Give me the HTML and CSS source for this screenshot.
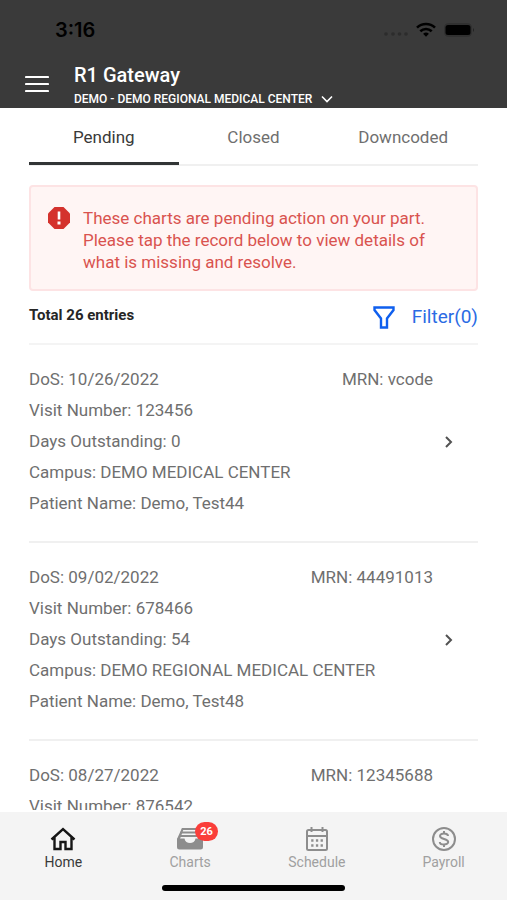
FILE: index.html
```
<!DOCTYPE html>
<html lang="en">

<head>
    <meta charset="UTF-8">
    <meta name="viewport" content="width=device-width, initial-scale=1.0">
    <title>R1 Gateway</title>
    <link rel="stylesheet" href="styles.css">
</head>

<body>
    <header>
        <div class="status-bar">
            <span class="time">3:16</span>
            <div class="status-icons">
                <svg width="24" height="12" viewBox="0 0 24 12" fill="#2c2c2c">
                    <circle cx="2" cy="10" r="1.8"/><circle cx="9" cy="10" r="1.8"/><circle cx="15.5" cy="10" r="1.8"/><circle cx="22" cy="10" r="1.8"/>
                </svg>
                <svg width="20" height="16" viewBox="0 0 20 16" fill="none" stroke="#000" stroke-width="2.6">
                    <path d="M1 5.600a13 13 0 0 1 18 0M4.300 9.200a8.400 8.400 0 0 1 11.400 0"/>
                    <path d="M10 14.800l-2.900-3a4.200 4.200 0 0 1 5.800 0z" fill="#000" stroke="none"/>
                </svg>
                <svg width="31" height="14" viewBox="0 0 31 14">
                    <rect x=".5" y=".5" width="27" height="13" rx="4" fill="#303030" stroke="#303030"/>
                    <rect x="1.5" y="2" width="25" height="10" rx="2.5" fill="#000"/>
                    <path d="M29 5v4q2-2 0-4z" fill="#222"/>
                </svg>
            </div>
        </div>
        <div class="app-bar">
            <button type="button" class="menu-btn" aria-label="Menu">
                <svg width="24" height="18" viewBox="0 0 24 18" stroke="#fff" stroke-width="2.2" stroke-linecap="round">
                    <path d="M1 2h22M1 9h22M1 16h22"/>
                </svg>
            </button>
            <div>
                <h1>R1 Gateway</h1>
                <button type="button" class="facility-btn">DEMO - DEMO REGIONAL MEDICAL CENTER
                    <svg width="12" height="8" viewBox="0 0 12 8" fill="none" stroke="#fff" stroke-width="1.6">
                        <path d="M1 1.500l5 5 5-5"/>
                    </svg>
                </button>
            </div>
        </div>
    </header>

    <main>
        <div class="tabs">
            <button type="button" class="tab active">Pending</button>
            <button type="button" class="tab">Closed</button>
            <button type="button" class="tab">Downcoded</button>
        </div>

        <div class="alert">
            <svg width="24" height="24" viewBox="0 0 24 24">
                <path d="M7.500 1h9L23 7.500v9L16.500 23h-9L1 16.500v-9z" fill="#d4322d"/>
                <path d="M10.700 5.500h2.600v8h-2.600zM10.500 15.500h3v3h-3z" fill="#fff"/>
            </svg>
            <p>These charts are pending action on your part. Please tap the record below to view details of what is missing and resolve.</p>
        </div>

        <div class="list-header">
            <strong>Total 26 entries</strong>
            <button type="button" class="filter-btn">
                <svg width="22" height="23" viewBox="0 0 22 23" fill="none" stroke="#0f5fee" stroke-width="2.4">
                    <path d="M1.500 1.500h19v2.600L14 12.500v9H8v-9L1.500 4.100z"/>
                </svg>
                Filter(0)
            </button>
        </div>

        <ul class="records">
            <li>
                <a href="#" class="record">
                    <div class="details">
                        <div class="row"><span>DoS: 10/26/2022</span><span>MRN: vcode</span></div>
                        <div>Visit Number: 123456</div>
                        <div>Days Outstanding: 0</div>
                        <div>Campus: DEMO MEDICAL CENTER</div>
                        <div>Patient Name: Demo, Test44</div>
                    </div>
                    <svg class="chevron" width="8" height="12" viewBox="0 0 8 12"><path d="M1 1l5 5-5 5"/></svg>
                </a>
            </li>
            <li>
                <a href="#" class="record">
                    <div class="details">
                        <div class="row"><span>DoS: 09/02/2022</span><span>MRN: 44491013</span></div>
                        <div>Visit Number: 678466</div>
                        <div>Days Outstanding: 54</div>
                        <div>Campus: DEMO REGIONAL MEDICAL CENTER</div>
                        <div>Patient Name: Demo, Test48</div>
                    </div>
                    <svg class="chevron" width="8" height="12" viewBox="0 0 8 12"><path d="M1 1l5 5-5 5"/></svg>
                </a>
            </li>
            <li>
                <a href="#" class="record">
                    <div class="details">
                        <div class="row"><span>DoS: 08/27/2022</span><span>MRN: 12345688</span></div>
                        <div>Visit Number: 876542</div>
                    </div>
                    <svg class="chevron" width="8" height="12"></svg>
                </a>
            </li>
        </ul>
    </main>

    <footer>
        <nav>
            <a href="#" class="active">
                <svg width="26" height="24" viewBox="0 0 26 24" fill="none" stroke="#161616" stroke-width="2.4">
                    <path d="M1.500 12.500L13 2l11.500 10.500M4.500 10v12h6v-7h5v7h6V10"/>
                </svg>
                Home
            </a>
            <a href="#">
                <span class="icon-wrap">
                    <svg width="26" height="24" viewBox="0 0 26 24" fill="#8d8d8d">
                        <path d="M5 1h16l1 2H4.500zM3.800 4.500h18.400l.8 2H3zM2.500 8h21l.5 2H2z"/>
                        <path d="M5 1h2L3 12H0zM21 1h-2l4 11h3z"/>
                        <path d="M0 11.500h7.500c.6 6 10.400 6 11 0H26V20q0 2.500-2.500 2.500h-21Q0 22.500 0 20z"/>
                    </svg>
                    <span class="badge">26</span>
                </span>
                Charts
            </a>
            <a href="#">
                <svg width="24" height="24" viewBox="0 0 24 24" fill="none" stroke="#8d8d8d" stroke-width="2">
                    <rect x="2" y="3" width="20" height="20" rx="1.5"/>
                    <path d="M2 9h20M6.500 0v5M17.500 0v5"/>
                    <path d="M6.200 13.500h2.300M10.900 13.500h2.300M15.600 13.500h2.300M6.200 18.500h2.300M10.900 18.500h2.300M15.600 18.500h2.300" stroke-width="2.3"/>
                </svg>
                Schedule
            </a>
            <a href="#">
                <svg width="24" height="24" viewBox="0 0 24 24" fill="none" stroke="#8d8d8d" stroke-width="2">
                    <circle cx="12" cy="12" r="11"/>
                    <path d="M16 9c0-3.200-8-3.400-8 0 0 3.600 8.200 2.300 8.200 6 0 3.500-8.400 3.300-8.400 0M12 4v3M12 17v3"/>
                </svg>
                Payroll
            </a>
        </nav>
        <div class="home-indicator"></div>
    </footer>
</body>

</html>
```
FILE: styles.css
```
* {
    box-sizing: border-box;
}

body {
    font-family: Roboto, "Liberation Sans", sans-serif;
    font-size: 17px;
    color: #6f6f6f;
    background-color: #fff;
    margin: 0;
    height: 100vh;
    display: flex;
    flex-direction: column;
}

button {
    font: inherit;
    color: inherit;
    background: none;
    border: none;
    padding: 0;
    cursor: pointer;
}

svg {
    display: block;
    flex-shrink: 0;
}

/* Header */
header {
    background-color: #3a3a3a;
    color: #fff;
    flex-shrink: 0;
}

.status-bar {
    display: flex;
    justify-content: space-between;
    align-items: center;
    height: 60px;
    padding: 0 32px 0 55px;
}

.time {
    font-family: Inter, sans-serif;
    font-size: 20px;
    font-weight: 600;
    color: #000;
}

.status-icons {
    display: flex;
    align-items: center;
    gap: 8px;
}

.app-bar {
    display: flex;
    align-items: center;
    gap: 25px;
    height: 48px;
    padding: 0 25px;
}

h1 {
    font-size: 20px;
    font-weight: 500;
    line-height: 24px;
    margin: 4px 0 2px;
}

.facility-btn {
    display: flex;
    align-items: center;
    gap: 9px;
    font-size: 12px;
    font-weight: 500;
    line-height: 20px;
}

/* Content */
main {
    flex: 1;
    min-height: 0;
    overflow: auto;
    scrollbar-width: none;
    margin-bottom: 2px;
    padding: 0 29px;
}

.tabs {
    display: flex;
    border-bottom: 2px solid #f0f0f0;
}

.tab {
    flex: 1;
    height: 57px;
    margin-bottom: -1px;
    padding-top: 4px;
    border-bottom: 3px solid transparent;
}

.tab.active {
    color: #393939;
    border-bottom-color: #323536;
}

.alert {
    display: flex;
    gap: 12px;
    margin-top: 19px;
    padding: 20px 40px 16px 16px;
    color: #d9534f;
    background-color: #fff5f4;
    border: 2px solid #fde3e4;
    border-radius: 4px;
}

.alert svg {
    margin-top: -1px;
}

.alert p {
    margin: 0;
    line-height: 22px;
}

.list-header {
    display: flex;
    justify-content: space-between;
    height: 54px;
    line-height: 48px;
    border-bottom: 2px solid #f4f4f4;
}

.list-header strong {
    font-size: 15px;
    color: #262626;
}

.filter-btn {
    display: flex;
    align-items: center;
    gap: 17px;
    font-size: 19px;
    color: #2b6be4;
}

.records {
    list-style: none;
    margin: 0;
    padding: 0;
}

.record {
    display: flex;
    align-items: center;
    gap: 12px;
    padding: 19px 25px 22px 0;
    line-height: 31px;
    color: inherit;
    text-decoration: none;
    border-bottom: 2px solid #f0f0f0;
}

.details {
    flex: 1;
}

.row {
    display: flex;
    justify-content: space-between;
}

.chevron {
    fill: none;
    stroke: #525252;
    stroke-width: 2;
}

/* Bottom navigation */
footer {
    flex-shrink: 0;
    background-color: #f4f4f4;
    padding-bottom: 9px;
}

nav {
    display: flex;
    padding-top: 15px;
}

nav a {
    flex: 1;
    display: flex;
    flex-direction: column;
    align-items: center;
    font-size: 14px;
    line-height: 22px;
    color: #a0a0a0;
    text-decoration: none;
}

nav a.active {
    color: #393939;
}

.icon-wrap {
    position: relative;
}

.badge {
    position: absolute;
    top: -5px;
    left: 18px;
    width: 23px;
    border-radius: 10px;
    background-color: #fa3e3a;
    color: #fff;
    font-size: 11px;
    font-weight: 700;
    line-height: 19px;
    text-align: center;
}

.home-indicator {
    width: 36%;
    height: 6px;
    margin: 12px auto 0;
    border-radius: 3px;
    background-color: #000;
}
```
